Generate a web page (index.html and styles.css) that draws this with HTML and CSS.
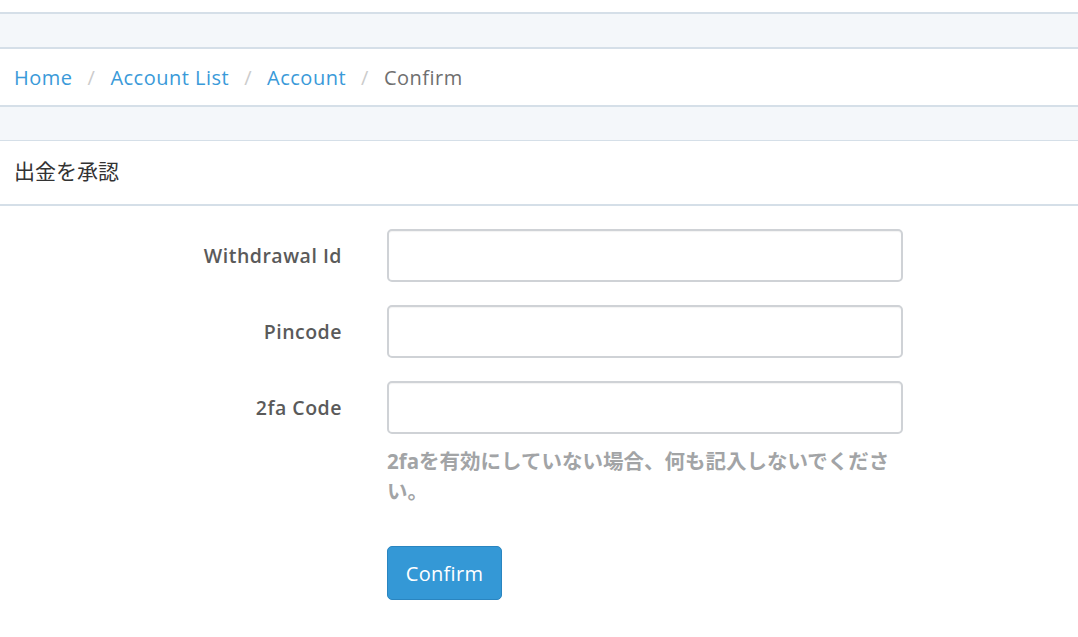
FILE: index.html
```html
<!DOCTYPE html>
<html lang="ja">
<head>
<meta charset="utf-8">
<title>Confirm</title>
<link rel="stylesheet" href="styles.css">
</head>
<body>
<div class="top-space"></div>
<div class="band band-top"></div>
<nav class="breadcrumb">
  <a href="#" class="crumb">Home</a><span class="sep">/</span>
  <a href="#" class="crumb">Account List</a><span class="sep">/</span>
  <a href="#" class="crumb">Account</a><span class="sep">/</span>
  <span class="crumb active">Confirm</span>
</nav>
<div class="band band-mid"></div>
<div class="panel-heading">出金を承認</div>
<form class="form">
  <div class="row">
    <label class="label">Withdrawal Id</label>
    <input class="control" type="text">
  </div>
  <div class="row">
    <label class="label">Pincode</label>
    <input class="control" type="text">
  </div>
  <div class="row">
    <label class="label">2fa Code</label>
    <input class="control" type="text">
  </div>
  <div class="row row-help">
    <span></span>
    <p class="help">2faを有効にしていない場合、何も記入しないでください。</p>
  </div>
  <div class="row row-btn">
    <span></span>
    <div><button type="button" class="btn">Confirm</button></div>
  </div>
</form>
</body>
</html>
```

FILE: styles.css
```css
html, body {
  margin: 0;
  padding: 0;
  background: #ffffff;
}
body {
  font-family: "Open Sans", "Noto Sans CJK JP", sans-serif;
  color: #333333;
}
.top-space {
  height: 12px;
}
.band {
  background: #f4f7fa;
  height: 33px;
  border-top: 2px solid #d5dfe8;
}
.band-top {
  border-bottom: 2px solid #d5dfe8;
}
.band-mid {
  border-bottom: 1px solid #d5dfe8;
}
.breadcrumb {
  height: 56px;
  display: flex;
  align-items: center;
  padding-left: 14px;
  font-size: 20px;
  letter-spacing: 0.5px;
}
.crumb {
  color: #3a9ad9;
  text-decoration: none;
}
.crumb.active {
  color: #6f6f6f;
}
.sep {
  color: #cccccc;
  padding: 0 15px;
}
.panel-heading {
  height: 57px;
  padding-bottom: 6px;
  display: flex;
  align-items: center;
  padding-left: 14px;
  font-size: 21px;
  color: #333333;
  border-bottom: 2px solid #d5dfe8;
}
.form {
  padding-top: 23px;
}
.row {
  display: grid;
  grid-template-columns: 342px 516px;
  column-gap: 45px;
  align-items: center;
  margin-bottom: 23px;
}
.label {
  text-align: right;
  font-size: 19.5px;
  font-weight: 600;
  letter-spacing: 0.5px;
  color: #5a5a5a;
}
.control {
  height: 53px;
  box-sizing: border-box;
  border: 2px solid #cfd2d6;
  border-radius: 5px;
  font-size: 18px;
  padding: 0 16px;
  box-shadow: inset 0 1px 1px rgba(0,0,0,0.05);
  outline: none;
}
.row-help {
  margin-top: -11px;
  margin-bottom: 0;
}
.help {
  margin: 0;
  font-size: 20.5px;
  line-height: 30px;
  font-weight: 700;
  color: #a2a4a6;
}
.row-btn {
  margin-top: 40px;
}
.btn {
  width: 115px;
  height: 54px;
  background: #3498d6;
  border: 1px solid #2a85c0;
  border-radius: 5px;
  color: #ffffff;
  font-family: "Open Sans", sans-serif;
  font-size: 20px;
  letter-spacing: 0.3px;
  cursor: pointer;
}
```
